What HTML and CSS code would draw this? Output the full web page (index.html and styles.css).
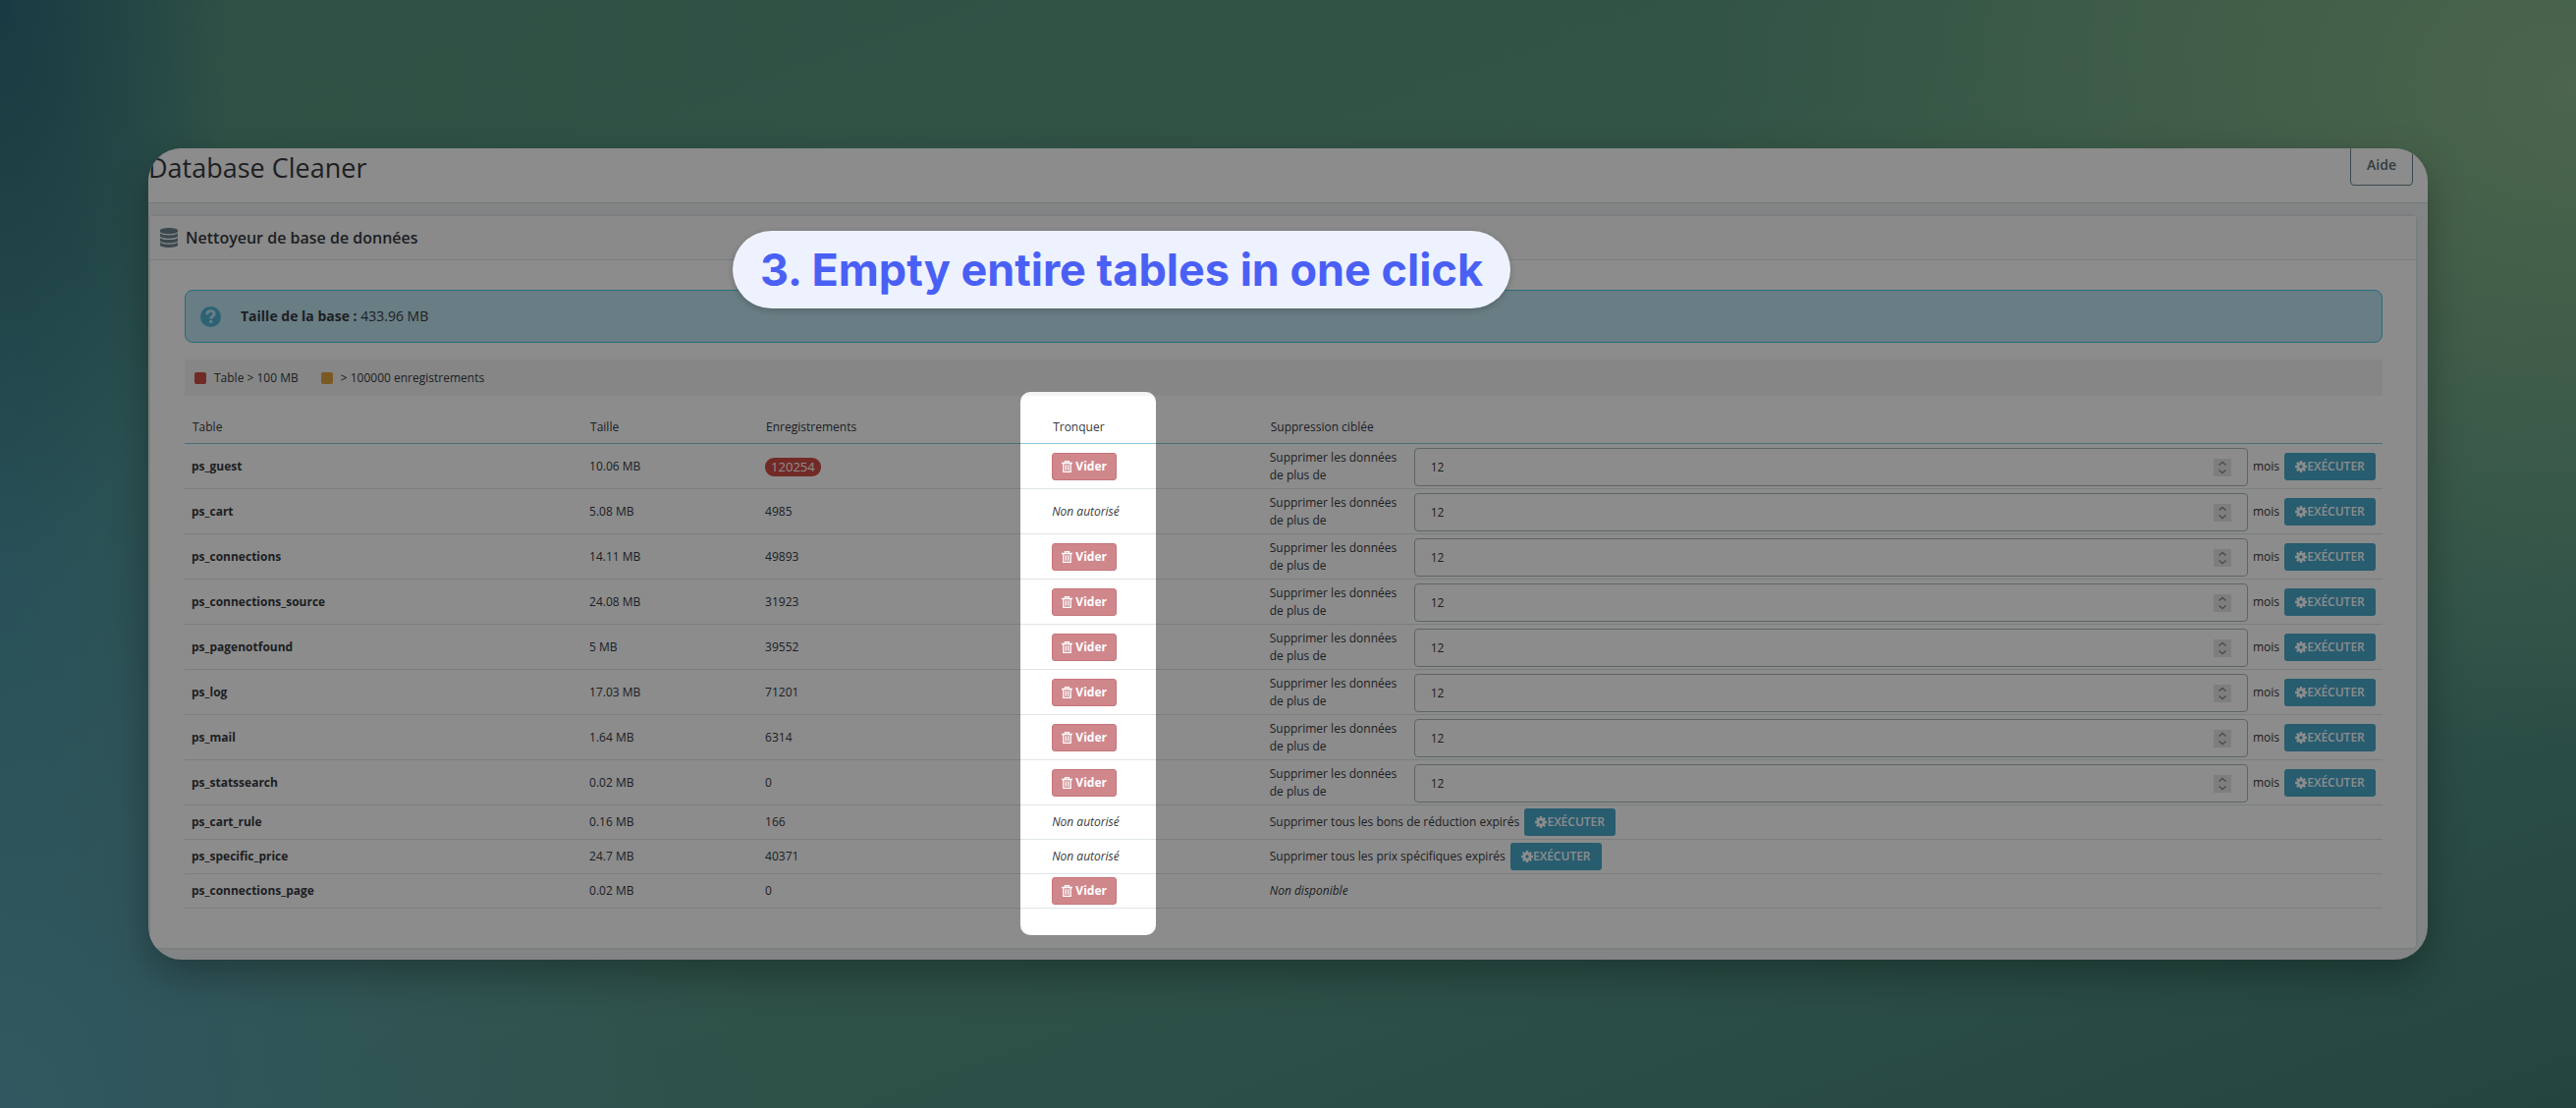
FILE: index.html
```html
<!DOCTYPE html>
<html lang="fr">
<head>
<meta charset="utf-8">
<title>Database Cleaner</title>
<link rel="stylesheet" href="styles.css">
</head>
<body>
<svg class="sprite" aria-hidden="true">
  <symbol id="trash" viewBox="0 0 11 12"><path d="M0 2.500h11M3.500 2.500V.7h4v1.800M1.800 2.500v8.800h7.400V2.500M4.300 4.300v5.500M6.700 4.300v5.500" fill="none" stroke="currentColor" stroke-width="1.300"/></symbol>
  <symbol id="gear" viewBox="0 0 12 12"><g fill="none" stroke="currentColor"><circle cx="6" cy="6" r="3.100" stroke-width="2.800"/><path d="M6 0v2.200M6 9.800V12M0 6h2.200M9.800 6H12M1.800 1.800l1.600 1.600M8.600 8.600l1.600 1.600M10.200 1.800L8.600 3.400M3.400 8.600l-1.600 1.600" stroke-width="2.300"/></g></symbol>
</svg>
<main class="window">
  <header class="page-head">
    <h1>Database Cleaner</h1>
    <button class="help" type="button">Aide</button>
  </header>
  <section class="panel">
    <h2 class="panel-head">
      <svg class="db" viewBox="0 0 18 20" aria-hidden="true"><path fill="currentColor" d="M0 2.500C0 1.100 4 0 9 0s9 1.100 9 2.500v1.300C18 5.200 14 6.300 9 6.300S0 5.200 0 3.800zM0 5.600c1.500 1.200 5 1.900 9 1.900s7.500-.7 9-1.900v2.700c0 1.400-4 2.500-9 2.500S0 9.700 0 8.300zM0 10.200c1.500 1.200 5 1.900 9 1.900s7.500-.7 9-1.900v2.700c0 1.400-4 2.500-9 2.500S0 14.300 0 12.900zM0 14.800c1.500 1.200 5 1.900 9 1.900s7.500-.7 9-1.900v2.700C18 18.900 14 20 9 20s-9-1.100-9-2.500z"/></svg>
      Nettoyeur de base de données
    </h2>
    <div class="panel-body">
      <div class="alert">
        <svg class="question" viewBox="0 0 20 20" aria-hidden="true"><circle cx="10" cy="10" r="10" fill="currentColor"/><path d="M6.400 7.700C6.500 5.400 8 4.400 10 4.400s3.500 1 3.500 2.800c0 2.400-3.300 2.300-3.300 4.900" fill="none" stroke="#c0e4f0" stroke-width="2.800"/><path d="M8.700 13.300h3v2.700h-3z" fill="#c0e4f0"/></svg>
        <p><strong>Taille de la base :</strong> 433.96 MB</p>
      </div>
      <div class="legend">
        <span class="key red"></span><span class="key-text">Table &gt; 100 MB</span>
        <span class="key amber"></span><span class="key-text">&gt; 100000 enregistrements</span>
      </div>
      <table>
        <colgroup><col class="c-name"><col class="c-size"><col class="c-rows"><col class="c-empty"><col></colgroup>
        <thead><tr><th>Table</th><th>Taille</th><th>Enregistrements</th><th>Tronquer</th><th>Suppression ciblée</th></tr></thead>
        <tbody id="rows"></tbody>
      </table>
    </div>
  </section>
</main>
<div class="spotlight"></div>
<p class="caption">3. Empty entire tables in one click</p>
<script src="rows.js"></script>
</body>
</html>
```
FILE: rows.js
```js
const rows = [
  ["ps_guest", "10.06 MB", "120254", true, "months"],
  ["ps_cart", "5.08 MB", "4985", false, "months"],
  ["ps_connections", "14.11 MB", "49893", true, "months"],
  ["ps_connections_source", "24.08 MB", "31923", true, "months"],
  ["ps_pagenotfound", "5 MB", "39552", true, "months"],
  ["ps_log", "17.03 MB", "71201", true, "months"],
  ["ps_mail", "1.64 MB", "6314", true, "months"],
  ["ps_statssearch", "0.02 MB", "0", true, "months"],
  ["ps_cart_rule", "0.16 MB", "166", false, "Supprimer tous les bons de réduction expirés"],
  ["ps_specific_price", "24.7 MB", "40371", false, "Supprimer tous les prix spécifiques expirés"],
  ["ps_connections_page", "0.02 MB", "0", true, null]
];

const run = '<button type="button" class="run"><svg viewBox="0 0 12 12" aria-hidden="true"><use href="#gear"/></svg>EXÉCUTER</button>';
const empty = '<button type="button" class="empty"><svg viewBox="0 0 11 12" aria-hidden="true"><use href="#trash"/></svg>Vider</button>';

function target(name, kind) {
  if (kind === null) return "<em>Non disponible</em>";
  if (kind !== "months") return `<div class="target"><span>${kind}</span>${run}</div>`;
  return `<div class="target">
    <label class="target-label" for="m-${name}">Supprimer les données de plus de</label>
    <span class="number"><input id="m-${name}" type="number" value="12">
      <svg class="spin" viewBox="0 0 18 18" aria-hidden="true"><path d="M5.500 6.500L9 3.500l3.500 3M5.500 11.500l3.500 3 3.500-3" fill="none" stroke="currentColor" stroke-width="1.500"/></svg>
    </span>
    <span class="unit">mois</span>${run}</div>`;
}

document.getElementById("rows").innerHTML = rows.map(([name, size, count, canEmpty, kind]) => `
  <tr class="${kind === "months" ? "tall" : "short"}">
    <td><strong>${name}</strong></td>
    <td>${size}</td>
    <td>${Number(count) > 100000 ? `<span class="badge">${count}</span>` : count}</td>
    <td>${canEmpty ? empty : "<em>Non autorisé</em>"}</td>
    <td>${target(name, kind)}</td>
  </tr>`).join("");
```
FILE: styles.css
```css
* { box-sizing: border-box; }

body {
  position: relative;
  margin: 0;
  min-height: 100vh;
  padding: 151px;
  overflow: hidden;
  font: 12px/18px "Open Sans", "Noto Sans", sans-serif;
  color: #363a41;
  background:
    radial-gradient(ellipse 9% 50% at 0 0, #2e6a78 0, rgba(46, 106, 120, 0) 100%),
    radial-gradient(ellipse 30% 80% at 0 100%, #5a9fb0 0, rgba(90, 159, 176, 0) 100%),
    radial-gradient(ellipse 12% 70% at 0 55%, #3f8a98 0, rgba(63, 138, 152, 0) 100%),
    radial-gradient(ellipse 34% 60% at 100% 8%, #8ab88a 0, rgba(138, 184, 138, 0) 100%),
    linear-gradient(160deg, #55937f 0, #5c9a80 40%, #509183 75%, #437f73 100%);
}

h1, h2, p { margin: 0; font-weight: 400; }
button, input { font: inherit; color: inherit; }
.sprite { display: none; }

.window {
  overflow: hidden;
  border-radius: 34px;
  background: #eff1f2;
  box-shadow: 0 16px 40px rgba(0, 0, 0, .3);
}

.page-head {
  display: flex;
  justify-content: space-between;
  height: 56px;
  padding-right: 15px;
  background: #fff;
  border-bottom: 1px solid #d3d8db;
}
.page-head h1 { font-size: 27px; line-height: 40px; }
.help {
  width: 64px;
  height: 42px;
  margin-top: -4px;
  padding: 0;
  border: 1px solid #6c868e;
  border-radius: 4px;
  background: none;
  font-size: 14px;
  font-weight: 600;
  color: #5c7178;
}

.panel {
  margin: 12px 11px 11px 1px;
  border: 1px solid #dbe6e9;
  border-radius: 5px;
  background: #fff;
  box-shadow: 0 0 4px rgba(0, 0, 0, .06);
}
.panel-head {
  display: flex;
  align-items: center;
  gap: 8px;
  height: 45px;
  padding-left: 10px;
  border-bottom: 1px solid #dbe6e9;
  background: #fcfcfc;
  font-size: 16px;
  font-weight: 600;
}
.db { width: 18px; height: 20px; color: #6c868e; }
.panel-body { padding: 30px 34px 40px 35px; }

.alert {
  display: flex;
  align-items: center;
  gap: 20px;
  height: 54px;
  padding-left: 15px;
  border: 1px solid #4ac7e0;
  border-radius: 8px;
  background: #c0e4f0;
  font-size: 14px;
}
.question { width: 21px; height: 21px; color: #53b3d5; }

.legend {
  display: flex;
  align-items: center;
  height: 37px;
  margin-top: 17px;
  padding-left: 10px;
  background: #f4f4f4;
}
.key { width: 12px; height: 12px; margin-right: 8px; border-radius: 2px; }
.key-text + .key { margin-left: 23px; }
.red { background: #cf4e45; }
.amber { background: #e0a340; }

table { width: 100%; border-collapse: collapse; table-layout: fixed; }
.c-name { width: 18.1%; }
.c-size { width: 8%; }
.c-rows { width: 13.05%; }
.c-empty { width: 9.9%; }
th {
  height: 48px;
  padding: 16px 8px 0;
  border-bottom: 1px solid #8fc3e0;
  text-align: left;
  font-weight: 400;
}
td { padding: 0 7px; border-bottom: 1px solid #dfe5e8; }
.tall { height: 46px; }
.tall td { padding-top: 2px; }
.short { height: 35px; }

.badge {
  display: inline-block;
  height: 19px;
  padding: 0 6px;
  border-radius: 9px;
  background: #cf4e45;
  color: #fff;
  font-size: 13px;
}

.empty, .run {
  display: flex;
  align-items: center;
  justify-content: center;
  height: 28px;
  padding: 0;
  border-radius: 3px;
  color: #fff;
}
.empty {
  width: 66px;
  gap: 3px;
  border: 1px solid #c5757b;
  background: #d0878c;
  font-weight: 700;
}
.empty svg { width: 11px; height: 12px; }
.run {
  flex: none;
  width: 93px;
  border: 0;
  background: #4aa8cb;
  font-weight: 600;
}
.run svg { width: 12px; height: 12px; }

.target { display: flex; align-items: center; gap: 5px; }
.target-label { flex: none; width: 142px; padding-right: 12px; }
.number { position: relative; flex: 1; }
.number input {
  display: block;
  width: 100%;
  height: 39px;
  padding: 0 16px;
  border: 1px solid #a9b6ba;
  border-radius: 4px;
  background: #fff;
  appearance: textfield;
}
.spin {
  position: absolute;
  top: 11px;
  right: 17px;
  width: 18px;
  height: 18px;
  background: #e6e6e6;
  color: #8c8c8c;
}

.spotlight {
  position: absolute;
  left: 1039px;
  top: 399px;
  width: 138px;
  height: 553px;
  border-radius: 10px;
  box-shadow: 0 0 0 2600px rgba(0, 0, 0, .45);
  pointer-events: none;
}
.caption {
  position: absolute;
  left: 746px;
  top: 235px;
  height: 79px;
  padding: 0 28px;
  border-radius: 40px;
  background: #eef2ff;
  box-shadow: 0 2px 6px rgba(0, 0, 0, .2);
  color: #4a60f5;
  font: 700 45px/79px Inter, sans-serif;
  white-space: nowrap;
}
```
